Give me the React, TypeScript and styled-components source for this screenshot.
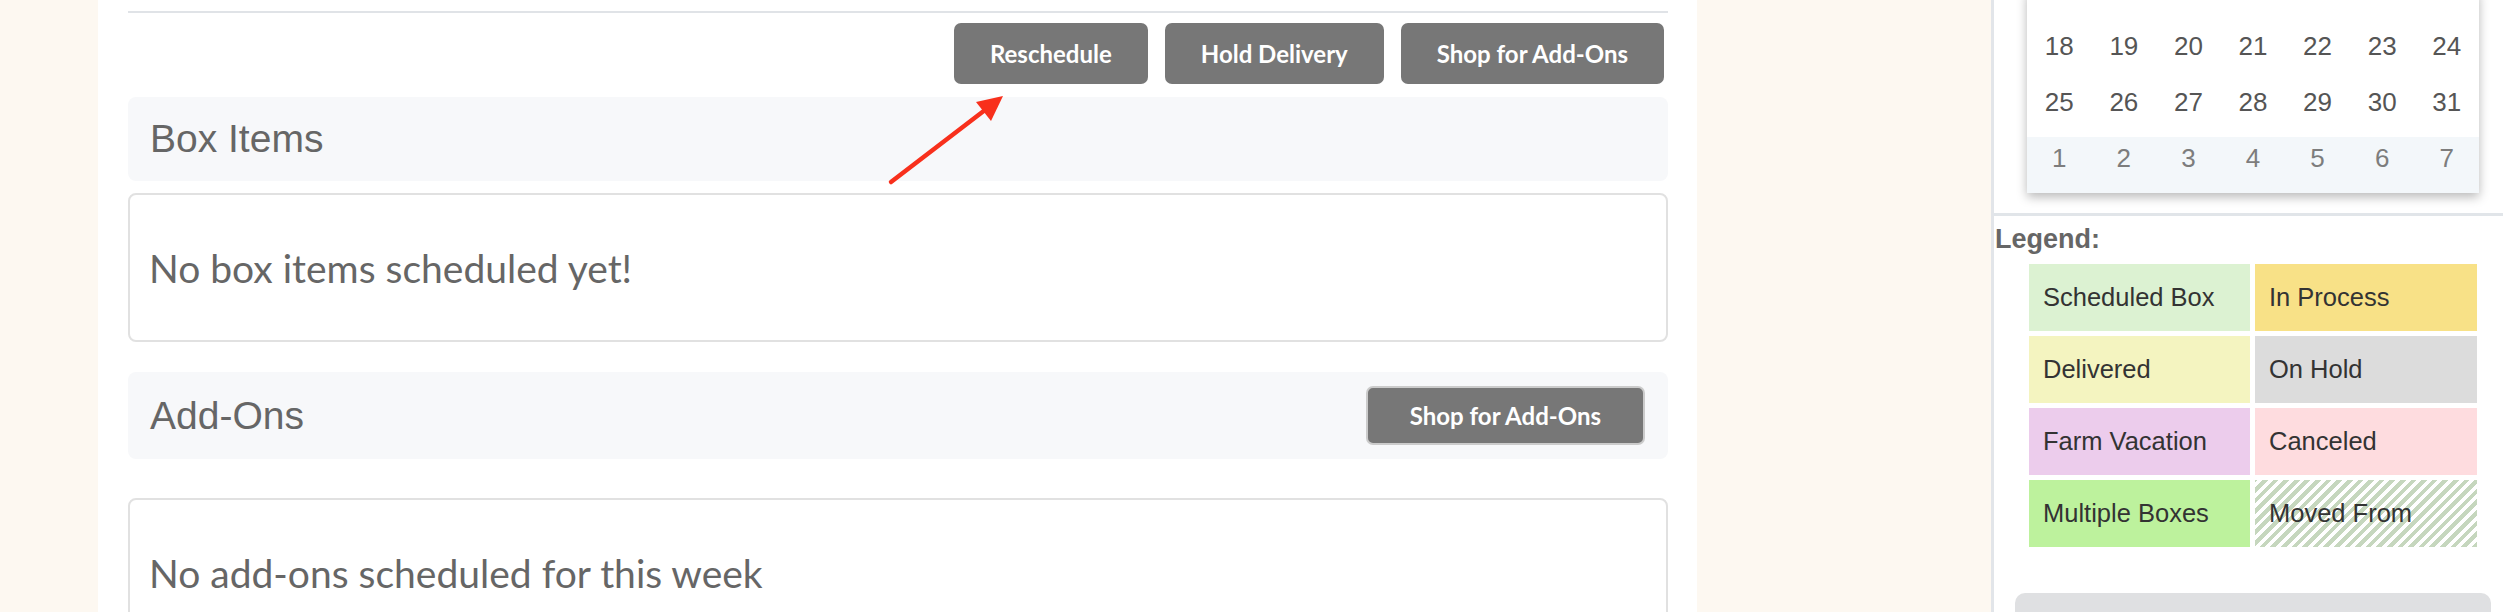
import React from 'react'
import styled, { createGlobalStyle } from 'styled-components'

const weeks = [
    { days: [18, 19, 20, 21, 22, 23, 24], next: false },
    { days: [25, 26, 27, 28, 29, 30, 31], next: false },
    { days: [1, 2, 3, 4, 5, 6, 7], next: true },
]

const legend = [
    { label: 'Scheduled Box', bg: '#dcf2d2' },
    { label: 'In Process', bg: '#f8e187' },
    { label: 'Delivered', bg: '#f4f4c0' },
    { label: 'On Hold', bg: '#dcdcdc' },
    { label: 'Farm Vacation', bg: '#ecccec' },
    { label: 'Canceled', bg: '#fedcdf' },
    { label: 'Multiple Boxes', bg: '#bdf29d' },
    { label: 'Moved From', bg: 'repeating-linear-gradient(-45deg, #c6d7be 0 4px, #ffffff 4px 7.5px)' },
]

export default () => {

    return (
        <Page>
            <GlobalStyle />
            <Main>
                <Divider />
                <ButtonRow>
                    <ActionButton>Reschedule</ActionButton>
                    <ActionButton>Hold Delivery</ActionButton>
                    <ActionButton>Shop for Add-Ons</ActionButton>
                </ButtonRow>

                <SectionHeader>
                    <SectionTitle>Box Items</SectionTitle>
                </SectionHeader>
                <EmptyCard>
                    <EmptyText>No box items scheduled yet!</EmptyText>
                </EmptyCard>

                <SectionHeader $tall $space={30}>
                    <SectionTitle>Add-Ons</SectionTitle>
                    <ActionButton $outlined>Shop for Add-Ons</ActionButton>
                </SectionHeader>
                <EmptyCard $space={39}>
                    <EmptyText>No add-ons scheduled for this week</EmptyText>
                </EmptyCard>

                {/* annotation arrow pointing at Reschedule */}
                <Arrow width="135" height="100" viewBox="0 0 135 100">
                    <line x1="11" y1="92" x2="105" y2="20" stroke="#f8301c" strokeWidth="4.5" strokeLinecap="round" />
                    <polygon points="123,6 96,12 111,31" fill="#f8301c" />
                </Arrow>
            </Main>

            <Sidebar>
                <CalendarWrap>
                    <CalendarCard>
                        {weeks.map((w, i) => (
                            <WeekRow key={i} $next={w.next}>
                                {w.days.map(d => (
                                    <DayCell key={d} $next={w.next}>{d}</DayCell>
                                ))}
                            </WeekRow>
                        ))}
                    </CalendarCard>
                </CalendarWrap>
                <SideDivider />
                <LegendTitle>Legend:</LegendTitle>
                <LegendGrid>
                    {legend.map(item => (
                        <LegendCell key={item.label} $bg={item.bg}>{item.label}</LegendCell>
                    ))}
                </LegendGrid>
                <GrayPanel />
            </Sidebar>
        </Page>
    )
}

// STYLE PROPERTIES
const GlobalStyle = createGlobalStyle`
    html, body {
        margin: 0;
        padding: 0;
        background: #fdf8f1;
        overflow: hidden;
    }
`
const Page = styled.div`
    display: flex;
    width: 2503px;
    height: 612px;
    overflow: hidden;
    background: #fdf8f1;
`
const Main = styled.div`
    position: relative;
    flex: none;
    margin-left: 98px;
    width: 1599px;
    padding: 11px 29px 0 30px;
    box-sizing: border-box;
    background: #ffffff;
`
const Divider = styled.div`
    height: 2px;
    background: #e0e3e7;
`
const ButtonRow = styled.div`
    display: flex;
    justify-content: flex-end;
    gap: 17px;
    margin-top: 10px;
    padding-right: 4px;
`
const ActionButton = styled.button<{ $outlined?: boolean }>`
    height: ${p => (p.$outlined ? 59 : 61)}px;
    padding: 0 ${p => (p.$outlined ? 42 : 36)}px;
    border: ${p => (p.$outlined ? '2px solid #cbcbcb' : 'none')};
    border-radius: 7px;
    box-sizing: border-box;
    background: #777777;
    color: #ffffff;
    font-family: Lato, "Liberation Sans", sans-serif;
    font-weight: 700;
    font-size: 24px;
    white-space: nowrap;
`
const SectionHeader = styled.div<{ $tall?: boolean; $space?: number }>`
    display: flex;
    align-items: center;
    justify-content: space-between;
    height: ${p => (p.$tall ? 87 : 84)}px;
    margin-top: ${p => p.$space ?? 13}px;
    padding: 0 23px 0 22px;
    box-sizing: border-box;
    background: #f7f8fa;
    border-radius: 8px;
`
const SectionTitle = styled.h2`
    margin: 0;
    font-family: "Liberation Sans", Arial, sans-serif;
    font-weight: 400;
    font-size: 39px;
    color: #666666;
`
const EmptyCard = styled.div<{ $space?: number }>`
    display: flex;
    align-items: center;
    height: 149px;
    margin-top: ${p => p.$space ?? 12}px;
    padding-left: 19px;
    box-sizing: border-box;
    border: 2px solid #e1e1e1;
    border-radius: 8px;
`
const EmptyText = styled.p`
    margin: 0;
    font-family: Lato, sans-serif;
    font-size: 39px;
    color: #666666;
`
const Arrow = styled.svg`
    position: absolute;
    left: 782px;
    top: 90px;
`
const Sidebar = styled.aside`
    flex: none;
    margin-left: 294px;
    width: 512px;
    border-left: 3px solid #e2e5e9;
    box-sizing: border-box;
    background: #ffffff;
`
const CalendarWrap = styled.div`
    padding-left: 33px;
`
const CalendarCard = styled.div`
    width: 452px;
    margin-top: -10px;
    padding-top: 35px;
    background: #ffffff;
    box-shadow: 0 4px 10px rgba(0, 0, 0, 0.28);
`
const WeekRow = styled.div<{ $next?: boolean }>`
    display: grid;
    grid-template-columns: repeat(7, 1fr);
    height: 56px;
    padding-bottom: 14px;
    box-sizing: border-box;
    align-items: center;
    background: ${p => (p.$next ? '#f3f7fa' : 'transparent')};
`
const DayCell = styled.span<{ $next?: boolean }>`
    text-align: center;
    font-family: "Liberation Sans", Arial, sans-serif;
    font-size: 26px;
    color: ${p => (p.$next ? '#7d7d7d' : '#555555')};
`
const SideDivider = styled.div`
    height: 3px;
    margin-top: 20px;
    background: #e1e5e9;
`
const LegendTitle = styled.div`
    margin-top: 8px;
    padding-left: 1px;
    font-family: "Liberation Sans", Arial, sans-serif;
    font-weight: 700;
    font-size: 27px;
    line-height: 30px;
    color: #666666;
`
const LegendGrid = styled.div`
    display: grid;
    grid-template-columns: 221px 222px;
    grid-auto-rows: 67px;
    gap: 5px;
    margin: 10px 0 0 35px;
`
const LegendCell = styled.div<{ $bg: string }>`
    display: flex;
    align-items: center;
    padding-left: 14px;
    background: ${p => p.$bg};
    font-family: "Liberation Sans", Arial, sans-serif;
    font-size: 25.5px;
    color: #333333;
`
const GrayPanel = styled.div`
    width: 476px;
    height: 60px;
    margin: 46px 0 0 21px;
    border-radius: 10px;
    background: #dfe0e2;
`
